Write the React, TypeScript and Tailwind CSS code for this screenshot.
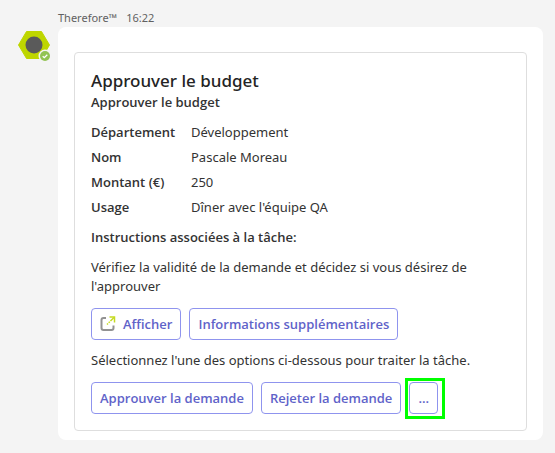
interface Fact {
  label: string;
  value: string;
}

const facts: Fact[] = [
  { label: "Département", value: "Développement" },
  { label: "Nom", value: "Pascale Moreau" },
  { label: "Montant (€)", value: "250" },
  { label: "Usage", value: "Dîner avec l'équipe QA" },
];

const bodyClass = "font-['Noto_Sans','Open_Sans',sans-serif]";

const buttonClass =
  "flex h-8 items-center rounded border border-[#8f94ee] bg-white px-2 font-semibold text-[#5f63c9] hover:bg-[#f5f5ff]";

const Avatar = () => (
  <svg width="34" height="32" viewBox="0 0 34 32" role="img" aria-label="Therefore" className="shrink-0">
    <path d="M8.500 .5h15l8 13.500-8 13.500h-15L.5 14z" fill="#bed600" stroke="#bed600" strokeLinejoin="round" />
    <circle cx="16" cy="14" r="8.500" fill="#5a5a5a" />
    <circle cx="27" cy="25" r="6.500" fill="#f4f4f4" />
    <circle cx="27" cy="25" r="5" fill="#92c353" />
    <path d="M24.700 25.200l1.600 1.500 3-3" fill="none" stroke="#fff" strokeWidth="1.300" />
  </svg>
);

const OpenIcon = () => (
  <svg width="16" height="16" viewBox="0 0 16 16" fill="none" aria-hidden="true">
    <path d="M6 2H3.500Q1.500 2 1.500 4v8q0 2 2 2h8q2 0 2-2V9.500" stroke="#929292" strokeWidth="2" />
    <path d="M9.500 1H14.500v5.500" stroke="#c5da20" strokeWidth="1.500" />
    <path d="M14 1.500L7 8.500" stroke="#c5da20" strokeWidth="1.500" strokeDasharray="5 1 1.500 1" />
  </svg>
);

const App = () => {
  return (
    <div className="min-h-screen bg-[#f4f4f4] pt-2 pr-3 pb-3 pl-[18px] font-['Open_Sans','Noto_Sans',sans-serif] text-[13px] leading-[19px] text-[#333333]">
      <header className={`${bodyClass} flex gap-[9px] pl-10 text-[11px] leading-[19px] text-[#616161]`}>
        <span>Therefore™</span>
        <time>16:22</time>
      </header>

      <main className="flex items-start gap-[6px]">
        <div className="pt-1">
          <Avatar />
        </div>

        <div className="min-w-0 flex-1 rounded-lg bg-white px-4 pt-[25px] pb-[9px]">
          <section className="rounded border border-[#dedede] p-4">
            <h1 className={`${bodyClass} text-[17px] leading-6 font-medium text-[#242424]`}>
              Approuver le budget
            </h1>
            <h2 className="font-semibold">Approuver le budget</h2>

            <dl className="mt-[11px] space-y-[6px]">
              {facts.map((fact) => (
                <div key={fact.label} className="flex">
                  <dt className="w-25 shrink-0 font-semibold">{fact.label}</dt>
                  <dd className={bodyClass}>{fact.value}</dd>
                </div>
              ))}
            </dl>

            <h3 className="mt-[11px] font-semibold">Instructions associées à la tâche:</h3>
            <p className={`${bodyClass} mt-[11px]`}>
              Vérifiez la validité de la demande et décidez si vous désirez de l'approuver
            </p>

            <div className="mt-3 flex flex-wrap gap-2">
              <button type="button" className={`${buttonClass} gap-[7px]`}>
                <OpenIcon />
                Afficher
              </button>
              <button type="button" className={buttonClass}>
                Informations supplémentaires
              </button>
            </div>

            <p className={`${bodyClass} mt-[11px]`}>
              Sélectionnez l'une des options ci-dessous pour traiter la tâche.
            </p>

            <div className="mt-3 flex flex-wrap gap-2">
              <button type="button" className={buttonClass}>
                Approuver la demande
              </button>
              <button type="button" className={buttonClass}>
                Rejeter la demande
              </button>
              <div className="relative">
                <button type="button" className={buttonClass}>
                  ...
                </button>
                <span className="pointer-events-none absolute -top-1 -right-[7px] -bottom-[5px] -left-1 border-3 border-[#00ff00]" />
              </div>
            </div>
          </section>
        </div>
      </main>
    </div>
  );
};

export default App;
